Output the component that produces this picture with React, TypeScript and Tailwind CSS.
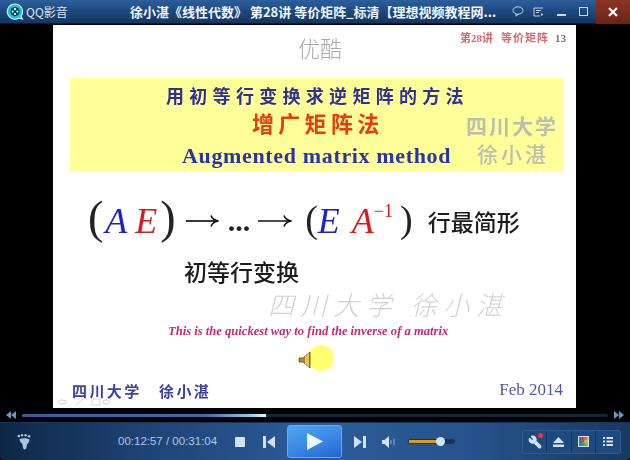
import React from 'react';
import { Wrench } from 'lucide-react';

const cjk = "font-['Noto_Sans_CJK_SC',sans-serif]";
const serif = "font-['Liberation_Serif','Noto_Sans_CJK_SC',serif]";

const TitleBar = () => (
  <div className="h-[24px] flex items-center bg-[linear-gradient(180deg,#2d5f9c_0%,#1e4a82_45%,#15365f_100%)] border-b border-[#0a1a30]">
    <svg width="18" height="18" viewBox="0 0 18 18" className="ml-[6px] shrink-0">
      <path d="M9 1a7.600 7.600 0 0 1 7.600 7.600c0 2-.7 3.600-1.600 4.800l1.400 2.600-3.400-1A7.600 7.600 0 1 1 9 1z" fill="#19c3d8" stroke="#d5f6fb" strokeWidth="1.1" />
      <circle cx="9" cy="8.6" r="4.6" fill="#07445f" />
      <circle cx="9" cy="6.2" r="1.1" fill="#fff" />
      <circle cx="6.6" cy="8.6" r="1.1" fill="#fff" />
      <circle cx="11.4" cy="8.6" r="1.1" fill="#fff" />
      <circle cx="9" cy="11" r="1.1" fill="#fff" />
    </svg>
    <span className={`ml-[2px] w-[104px] shrink-0 text-[12px] text-[#d6e6f7] ${cjk}`}>QQ影音</span>
    <span className={`w-[382px] shrink-0 whitespace-nowrap overflow-hidden text-[13px] font-bold text-[#eef5fc] ${cjk}`}>
      徐小湛《线性代数》 第28讲 等价矩阵_标清【理想视频教程网...
    </span>
    <div className="flex items-center text-[#b9d0e8]">
      <svg width="12" height="11" viewBox="0 0 12 11" fill="none" stroke="currentColor" className="shrink-0">
        <ellipse cx="6" cy="4.5" rx="5" ry="3.7" />
        <path d="M4 8v2.200l2.400-2" />
      </svg>
      <svg width="11" height="10" viewBox="0 0 11 10" fill="none" stroke="currentColor" className="ml-[9px] shrink-0">
        <path d="M10 1H1v8h6M3 3.500h5M3 5.500h3" />
        <path d="M8 6l2.500 1.500L8 9z" fill="currentColor" stroke="none" />
      </svg>
      <div className="w-[9px] h-[2px] bg-[#c7daef] mt-[6px] ml-[13px]" />
      <div className="w-[9px] h-[9px] border border-[#c7daef] ml-[13px]" />
    </div>
    <div className="ml-auto w-[34px] h-[24px] bg-[linear-gradient(180deg,#8c3524,#6a2416)] flex items-center justify-center">
      <svg width="10" height="10" viewBox="0 0 10 10" stroke="#fff" strokeWidth="2.2">
        <path d="M1 1l8 8M9 1l-8 8" />
      </svg>
    </div>
  </div>
);

const Arrow = ({ width }: { width: number }) => (
  <svg width={width} height="14" viewBox={`0 0 ${width} 14`} fill="none" stroke="#111" className="shrink-0">
    <path d={`M0 7h${width - 1}`} strokeWidth="1.7" />
    <path d={`M${width - 8} 1.500c1 3 4 5 7.500 5.500c-3.500 .5-6.500 2.500-7.500 5.500`} strokeWidth="1.6" />
  </svg>
);

const Slide = () => (
  <div className="relative w-[523px] h-[383px] bg-white flex flex-col ml-[53px] overflow-hidden blur-[0.35px]">
    {/* header */}
    <div className="relative h-[53px] shrink-0">
      <div className={`pt-[8px] pl-[245px] text-[22px] leading-[28px] font-light text-[#a9a9a9] ${cjk}`}>优酷</div>
      <div className={`absolute left-[407px] top-[6px] flex text-[11px] leading-[14px] whitespace-nowrap ${serif}`}>
        <span className="text-[#d66a6a] font-bold">第28讲</span>
        <span className="ml-[8px] tracking-[1px] text-[#d66a6a] font-bold">等价矩阵</span>
        <span className="ml-[6px] text-[#333]">13</span>
      </div>
    </div>

    {/* yellow box */}
    <div className="relative mx-[17px] w-[493px] h-[93px] shrink-0 bg-[#ffff99] flex flex-col">
      <div className={`pt-[5px] pl-[96px] text-[18px] leading-[24px] font-bold tracking-[5.300px] text-[#2d3196] whitespace-nowrap ${cjk}`}>
        用初等行变换求逆矩阵的方法
      </div>
      <div className={`pl-[182px] text-[22px] leading-[30px] font-bold tracking-[4.300px] text-[#ee3a10] whitespace-nowrap ${cjk}`}>
        增广矩阵法
      </div>
      <div className={`pt-[6px] pl-[112px] text-[22px] leading-[26px] font-bold tracking-[0.65px] text-[#2a34a8] whitespace-nowrap ${serif}`}>
        Augmented matrix method
      </div>
      <div className={`absolute left-[396px] top-[34px] text-[21px] leading-[26px] font-bold tracking-[2px] text-[#bdbdb0] whitespace-nowrap ${cjk}`}>
        四川大学
      </div>
      <div className={`absolute left-[407px] top-[62px] text-[21px] leading-[26px] font-medium tracking-[3px] text-[#bdbdb0] whitespace-nowrap ${cjk}`}>
        徐小湛
      </div>
    </div>

    {/* equation */}
    <div className={`mt-[25px] h-[50px] shrink-0 pl-[35px] flex items-center whitespace-nowrap ${serif}`}>
      <span className="text-[46px] leading-[50px] font-light text-[#222] mt-[-6px]">(</span>
      <span className="ml-[2px] text-[36px] italic text-[#2020d0]">A</span>
      <span className="ml-[8px] text-[36px] italic text-[#e01818]">E</span>
      <span className="ml-[3px] text-[46px] leading-[50px] font-light text-[#222] mt-[-6px]">)</span>
      <span className="ml-[10px]"><Arrow width={33} /></span>
      <span className="ml-[9px] text-[30px] leading-[32px] font-bold text-[#222]">...</span>
      <span className="ml-[8px]"><Arrow width={34} /></span>
      <span className="ml-[13px] text-[38px] leading-[50px] font-light text-[#222] mt-[-4px]">(</span>
      <span className="text-[36px] italic text-[#2020d0]">E</span>
      <span className="ml-[12px] text-[36px] italic text-[#e01818]">A</span>
      <span className="text-[18px] leading-[20px] text-[#e01818] mt-[-20px]">−1</span>
      <span className="ml-[7px] text-[38px] leading-[50px] font-light text-[#222] mt-[-4px]">)</span>
      <span className={`ml-[15px] text-[23px] font-medium text-[#1c1c1c] ${cjk}`}>行最简形</span>
    </div>

    <div className={`mt-[9px] pl-[131px] h-[32px] shrink-0 text-[23px] leading-[32px] font-medium text-[#1c1c1c] whitespace-nowrap ${cjk}`}>
      初等行变换
    </div>

    {/* watermark */}
    <div className={`pl-[215px] h-[34px] shrink-0 text-[26px] leading-[34px] font-extralight tracking-[6.600px] text-[#d2d2d2] italic whitespace-nowrap ${cjk}`}>
      四川大学 徐小湛
    </div>

    <div className={`pt-[2px] pl-[115px] h-[19px] shrink-0 text-[12.600px] leading-[17px] italic font-bold text-[#d3246f] whitespace-nowrap ${serif}`}>
      This is the quickest way to find the inverse of a matrix
    </div>

    {/* speaker */}
    <div className="mt-[4px] h-[28px] shrink-0 flex items-center pl-[245px]">
      <svg width="16" height="18" viewBox="0 0 16 18" className="relative z-10 shrink-0 mt-[4px]">
        <path d="M1 7h4l7-6v16l-7-6H1z" fill="#b8862a" stroke="#5f4a18" strokeWidth="0.8" />
        <path d="M7 5l4-3v14l-4-3z" fill="#e8c060" />
      </svg>
      <div className="ml-[-6px] w-[26px] h-[26px] rounded-full bg-[#ffff70]" />
    </div>

    {/* footer */}
    <div className="mt-auto h-[27px] shrink-0 flex items-start justify-between pl-[19px] pr-[13px]">
      <span className={`text-[15px] leading-[20px] font-bold tracking-[2.400px] text-[#3d3fa6] whitespace-pre ${cjk}`}>四川大学   徐小湛</span>
      <span className={`text-[17px] leading-[20px] mt-[-1px] text-[#5356a8] ${serif}`}>Feb 2014</span>
    </div>
    <div className="absolute left-[4px] bottom-[2px] flex text-[#d4d4d4]">
      <svg width="54" height="8" viewBox="0 0 54 8" fill="none" stroke="currentColor">
        <path d="M5 1L1 4l4 3V5.500h4v-3H5zM19 7l7-6M35 1h8v6h-8zM49 1l4 3-4 3V5.500h-3v-3h3z" />
      </svg>
    </div>
  </div>
);

const ProgressRow = () => (
  <div className="h-[14px] flex items-center pl-[6px] pr-[6px] bg-black">
    <svg width="10" height="8" viewBox="0 0 10 8" fill="#6f93c4" className="shrink-0">
      <path d="M5 0v8L0 4zM10 0v8L5 4z" />
    </svg>
    <div className="ml-[6px] w-[586px] h-[3px] rounded-full bg-[#13243e] overflow-hidden shrink-0">
      <div className="w-[244px] h-full bg-[linear-gradient(90deg,#3a5f9f_0%,#3f68ac_75%,#8fd0ee_94%,#e0fbff_100%)]" />
    </div>
    <svg width="10" height="8" viewBox="0 0 10 8" fill="#6f93c4" className="ml-auto shrink-0">
      <path d="M0 0v8l5-4zM5 0v8l5-4z" />
    </svg>
  </div>
);

const ToolCell = ({ children, last }: { children: React.ReactNode; last?: boolean }) => (
  <div className={`relative w-[25px] h-full flex items-center justify-center ${last ? '' : 'border-r border-[#17365f]'}`}>
    {children}
  </div>
);

const Controls = () => (
  <div className="h-[38px] flex items-center rounded-b-[4px] border-t border-[#16345c] bg-[linear-gradient(90deg,#0e2745_0%,#1d4273_22%,#2c5c9a_50%,#26538b_75%,#173860_100%)]">
    <svg width="14" height="16" viewBox="0 0 14 16" fill="#a9c4de" className="ml-[17px] shrink-0">
      <circle cx="1.800" cy="2" r="1.300" />
      <circle cx="5" cy="1.300" r="1.200" />
      <circle cx="8.500" cy="1.300" r="1.200" />
      <circle cx="12" cy="2.200" r="1.300" />
      <path d="M2.500 5c3-1 7-1 10 .5c0 2.500-1.500 3.500-2.500 5c-.3 2 -.5 5-2.500 5c-1.700 0-1.500-3-2-5C4.500 9 2.500 7.500 2.500 5z" />
    </svg>
    <span className="ml-[87px] w-[103px] shrink-0 text-[11.500px] text-[#a9c8ea] whitespace-nowrap font-['Liberation_Sans',sans-serif]">
      00:12:57 / 00:31:04
    </span>
    <div className="ml-[14px] w-[10px] h-[10px] bg-[#cfe3f5] rounded-[1px] shrink-0" />
    <svg width="12" height="12" viewBox="0 0 12 12" fill="#cfe3f5" className="ml-[18px] shrink-0">
      <path d="M0 0h3v12H0zM12 0v12L4 6z" />
    </svg>
    <div className="ml-[12px] w-[55px] h-[33px] shrink-0 rounded-[3px] flex items-center justify-center border border-[#5db0f2] bg-[linear-gradient(160deg,#4ea6f0_0%,#3a87e4_55%,#2363d2_100%)]">
      <svg width="16" height="17" viewBox="0 0 16 17" fill="#eaf5fd"><path d="M0 0l16 8.500L0 17z" /></svg>
    </div>
    <svg width="12" height="12" viewBox="0 0 12 12" fill="#cfe3f5" className="ml-[12px] shrink-0">
      <path d="M0 0l8 6-8 6zM9 0h3v12H9z" />
    </svg>
    <svg width="13" height="12" viewBox="0 0 13 12" fill="#cfe3f5" className="ml-[16px] shrink-0">
      <path d="M0 4h2.500L7 0v12L2.500 8H0z" />
      <path d="M9 4v4M12 2.500v7" stroke="#8fb0d0" fill="none" />
    </svg>
    <div className="relative ml-[12px] w-[49px] h-[7px] shrink-0 rounded-full bg-[#16355c] border border-[#2d5488]">
      <div className="ml-[1px] mt-[1px] w-[30px] h-[3px] bg-[#d8a010]" />
      <div className="absolute left-[28px] top-[-2px] w-[9px] h-[9px] rounded-full bg-[#cfe6f6]" />
    </div>
    <div className="ml-[66px] w-[99px] h-[24px] shrink-0 flex rounded-[3px] border border-[#2f5b92] bg-[#1f4a80]">
      <ToolCell>
        <Wrench size={14} fill="#cfe3f5" stroke="#cfe3f5" className="-scale-x-100" />
        <div className="absolute right-[3px] top-[2px] w-[5px] h-[5px] rounded-full bg-[#f03040]" />
      </ToolCell>
      <ToolCell>
        <svg width="11" height="10" viewBox="0 0 11 10" fill="#cfe3f5"><path d="M5.500 0L11 6H0zM0 7.500h11V10H0z" /></svg>
      </ToolCell>
      <ToolCell>
        <div className="w-[11px] h-[11px] border border-[#cfe3f5] bg-[conic-gradient(#e04040,#e8c020,#30b050,#3070e0,#e04040)]" />
      </ToolCell>
      <ToolCell last>
        <svg width="10" height="9" viewBox="0 0 10 9" fill="#cfe3f5"><path d="M0 0h2v2H0zM3.500 0H10v2H3.500zM0 3.500h2v2H0zM3.500 3.500H10v2H3.500zM0 7h2v2H0zM3.500 7H10v2H3.500z" /></svg>
      </ToolCell>
    </div>
  </div>
);

const App: React.FC = () => (
  <div className="w-[630px] h-[460px] bg-black overflow-hidden flex flex-col">
    <TitleBar />
    <div className="flex-1 bg-black pt-[1px]">
      <Slide />
    </div>
    <ProgressRow />
    <Controls />
  </div>
);

export default App;
